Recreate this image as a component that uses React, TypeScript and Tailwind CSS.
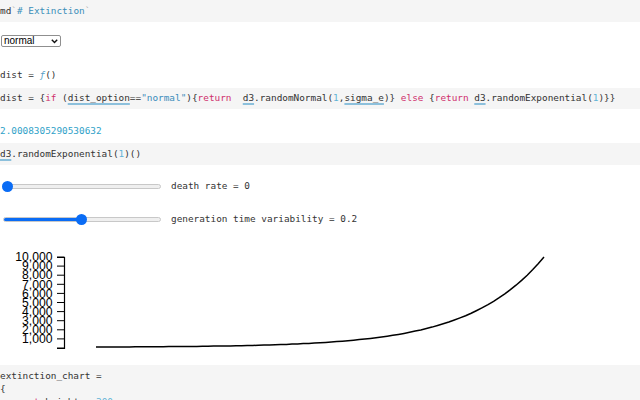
import React from 'react';

const mono = "font-['DejaVu_Sans_Mono',monospace] text-[9.4px] text-[#333] whitespace-pre";

function Ref({ children }: { children: React.ReactNode }) {
  return <span className="underline decoration-[#8cc0dc] underline-offset-[2px] decoration-[1.5px]">{children}</span>;
}

const Kw = ({ children }: { children: React.ReactNode }) => <span className="text-[#cf2f6c]">{children}</span>;
const Str = ({ children }: { children: React.ReactNode }) => <span className="text-[#3a8cbb]">{children}</span>;
const Num = ({ children }: { children: React.ReactNode }) => <span className="text-[#5fb3d6]">{children}</span>;

function Slider({ pct }: { pct: number }) {
  return (
    <div className="relative ml-[3px] w-[158px] h-[11px] flex items-center">
      <div className="w-full h-[5px] rounded-full bg-[#efefef] border border-[#c8c8c8] overflow-hidden">
        <div className="h-full bg-[#0a6cf5]" style={{ width: `${pct}%` }} />
      </div>
      <div
        className="absolute top-0 w-[11px] h-[11px] rounded-full bg-[#0a6cf5]"
        style={{ left: `calc(${pct}% * 0.94 - 1px)` }}
      />
    </div>
  );
}

function Chart() {
  // exponential curve from x=96 to x=544
  const pts: string[] = [];
  const k = 6;
  for (let i = 0; i <= 80; i++) {
    const t = i / 80;
    const v = (Math.exp(k * t) - 1) / (Math.exp(k) - 1);
    const x = 96 + t * 448;
    const y = 97 - v * 90;
    pts.push(`${x.toFixed(1)},${y.toFixed(1)}`);
  }
  const ticks = Array.from({ length: 11 }, (_, i) => i);
  return (
    <svg width={640} height={105} className="block">
      <g fontFamily="'Liberation Sans', sans-serif" fontSize="12.2" fill="#000">
        {ticks.map(i => {
          const y = 98 - i * 9.1;
          return (
            <g key={i}>
              <line x1={57} x2={64.5} y1={y} y2={y} stroke="#000" strokeWidth={1} />
              {i > 0 && (
                <text x={52.5} y={y} dy="0.35em" textAnchor="end">
                  {(i * 1000).toLocaleString('en-US')}
                </text>
              )}
            </g>
          );
        })}
      </g>
      <path d="M57,7.5H64.5V98.5H57" fill="none" stroke="#000" strokeWidth={1.2} />
      <polyline points={pts.join(' ')} fill="none" stroke="#000" strokeWidth={1.5} />
    </svg>
  );
}

export default function App() {
  return (
    <div className="w-[640px] h-[400px] overflow-hidden bg-white">
      <div className={`h-[22px] bg-[#f5f5f5] flex items-center ${mono}`}>
        <span>md</span><span className="text-[#aaa]">`</span><span className="text-[#3a8fb9]">{'# Extinction'}</span><span className="text-[#aaa]">`</span>
      </div>

      <div className="mt-[12px] h-[13px] flex items-center">
        <div className="relative ml-[1px] w-[60px] h-[12px]">
          <select className="block appearance-none w-full h-[12px] border border-[#8f8f8f] rounded-[2px] bg-white text-[10px] leading-[10px] font-['Liberation_Sans',sans-serif] text-black pl-[2px] py-0">
            <option>normal</option>
          </select>
          <svg className="absolute right-[3px] top-[4px] pointer-events-none" width="7" height="5" viewBox="0 0 7 5">
            <path d="M0.8,0.8 L3.5,3.6 L6.2,0.8" fill="none" stroke="#111" strokeWidth="1.4" />
          </svg>
        </div>
      </div>

      <div className={`mt-[17px] h-[22px] flex items-center ${mono}`}>
        <span>{'dist = '}</span><span className="italic text-[#5a9fc6]">ƒ</span><span>()</span>
      </div>

      <div className={`mt-[2px] h-[21px] bg-[#f5f5f5] flex items-center ${mono}`}>
        <span>{'dist = {'}</span><Kw>if</Kw><span>{' ('}</span><Ref>dist_option</Ref><span>==</span><Str>"normal"</Str><span>{'){'}</span><Kw>return</Kw><span>{'  '}</span><Ref>d3</Ref><span>.randomNormal(</span><Num>1</Num><span>,</span><Ref>sigma_e</Ref><span>{')} '}</span><Kw>else</Kw><span>{' {'}</span><Kw>return</Kw><span>{' '}</span><Ref>d3</Ref><span>.randomExponential(</span><Num>1</Num><span>{')}}'}</span>
      </div>

      <div className={`mt-[11px] h-[22px] flex items-center ${mono}`}>
        <span className="text-[#2fa1c8]">2.0008305290530632</span>
      </div>

      <div className={`mt-[1px] h-[22px] bg-[#f5f5f5] flex items-center ${mono}`}>
        <Ref>d3</Ref><span>.randomExponential(</span><Num>1</Num><span>)()</span>
      </div>

      <div className="mt-[10px] h-[22px] flex items-center">
        <Slider pct={0} />
        <span className={`ml-[10px] ${mono}`}>death rate = 0</span>
      </div>

      <div className="mt-[11px] h-[22px] flex items-center">
        <Slider pct={50} />
        <span className={`ml-[10px] ${mono}`}>generation time variability = 0.2</span>
      </div>

      <div className="mt-[20px]">
        <Chart />
      </div>

      <div className={`mt-[10px] bg-[#f5f5f5] pt-[4px] leading-[13px] ${mono}`}>
        <div>extinction_chart =</div>
        <div>{'{'}</div>
        <div><span>{'  '}</span><Kw>const</Kw><span>{' height = '}</span><Num>300</Num></div>
      </div>
    </div>
  );
}
